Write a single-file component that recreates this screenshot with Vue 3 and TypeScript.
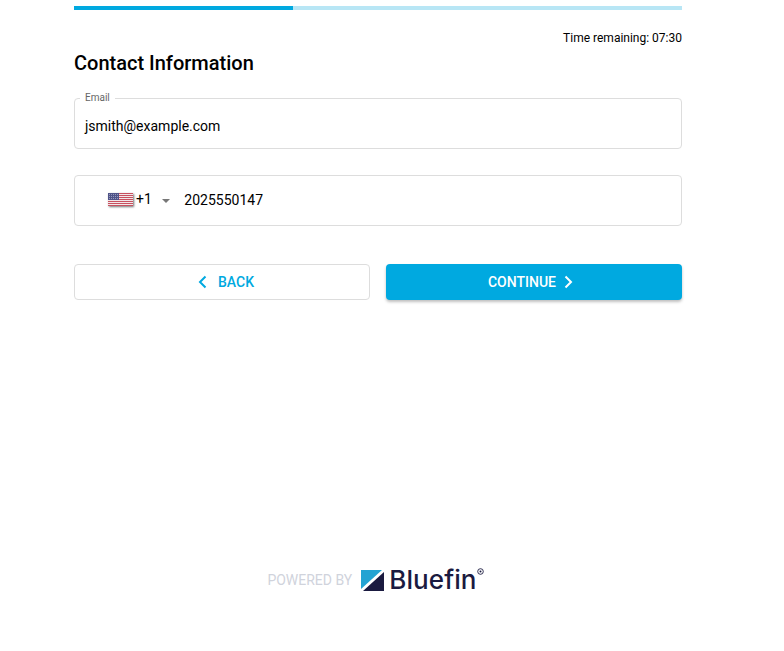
<script setup lang="ts">
const progress = 36
const stripes = [0, 2, 4, 6, 8, 10, 12]
</script>

<template>
  <main class="page">
    <div class="track"><div class="fill" :style="{ width: progress + '%' }"></div></div>
    <p class="timer">Time remaining: 07:30</p>
    <h1 class="title">Contact Information</h1>
    <fieldset class="field email">
      <legend class="legend">Email</legend>
      <span class="value">jsmith@example.com</span>
    </fieldset>
    <div class="field phone">
      <svg class="flag" width="25" height="13" viewBox="0 0 25 13">
        <rect width="25" height="13" fill="#f1e6e8" />
        <rect v-for="y in stripes" :key="y" x="0" :y="y" width="25" height="1" fill="#c8505f" />
        <rect width="11" height="7" fill="#4f5388" />
        <path d="M1 1.500h9M1 3.500h9M1 5.500h9" stroke="#a9abc8" stroke-width="0.8" stroke-dasharray="1 1" />
      </svg>
      <span class="code">+1</span>
      <span class="caret"></span>
      <span class="value">2025550147</span>
    </div>
    <div class="actions">
      <button class="btn back" type="button">
        <svg width="24" height="24" viewBox="0 0 24 24"><path d="M15.500 6.500 10 12l5.500 5.500" fill="none" stroke="currentColor" stroke-width="2" /></svg>
        <span class="back-label">BACK</span>
      </button>
      <button class="btn next" type="button">
        <span>CONTINUE</span>
        <svg width="24" height="24" viewBox="0 0 24 24"><path d="M9.500 6.500 15 12l-5.500 5.500" fill="none" stroke="currentColor" stroke-width="2" /></svg>
      </button>
    </div>
    <footer class="footer">
      <span class="powered">POWERED BY</span>
      <span class="logo">
        <svg width="23" height="21" viewBox="0 0 23 21">
          <path d="M0 0h21L0 19z" fill="#22a3d3" />
          <path d="M23 2v19H2z" fill="#1a1a40" />
        </svg>
        <span class="brand">Bluefin</span>
        <svg class="reg" width="7" height="7" viewBox="0 0 7 7"><circle cx="3.500" cy="3.500" r="2.800" fill="none" stroke="#1a1a40" stroke-width="0.9" /><circle cx="3.500" cy="3.500" r="1" fill="#1a1a40" /></svg>
      </span>
    </footer>
  </main>
</template>

<style scoped>
.page {
  box-sizing: border-box;
  width: 784px;
  height: 651px;
  padding: 6px 102px 0 74px;
  font-family: Roboto, "Liberation Sans", sans-serif;
  color: #000;
  background: #fff;
  display: flex;
  flex-direction: column;
}
.track { height: 4px; background: #b8e6f5; }
.fill { height: 100%; background: #00a9e0; }
.timer {
  margin: 21px 0 0;
  font-size: 12px;
  line-height: 14px;
  text-align: right;
}
.title {
  margin: 6px 0 0;
  font-size: 20px;
  line-height: 24px;
  font-weight: 500;
}
.field {
  box-sizing: border-box;
  margin: 0;
  border: 1px solid #dddddd;
  border-radius: 4px;
  min-width: 0;
}
.email {
  height: 57px;
  margin-top: 17px;
  padding: 0 10px;
}
.legend {
  margin-left: -5px;
  padding: 0 5px;
  font-size: 10px;
  line-height: 12px;
  color: #666;
}
.email .value { display: block; margin-top: 12px; }
.value { font-size: 14px; line-height: 20px; }
.phone {
  height: 51px;
  margin-top: 26px;
  padding: 0 0 0 33px;
  display: flex;
  align-items: center;
  font-size: 14px;
}
.flag { box-shadow: 1px 1px 2px rgba(0, 0, 0, 0.55); margin-bottom: 2px; }
.code { margin-left: 3px; line-height: 16px; margin-bottom: 3px; }
.caret {
  margin-left: 10px;
  width: 0;
  height: 0;
  border-left: 4.500px solid transparent;
  border-right: 4.500px solid transparent;
  border-top: 4.500px solid #777;
  margin-top: 1px;
}
.phone .value { margin-left: 14.500px; margin-bottom: 2px; }
.actions {
  display: grid;
  grid-template-columns: 1fr 1fr;
  gap: 16px;
  margin-top: 38px;
}
.btn {
  box-sizing: border-box;
  height: 36px;
  border-radius: 4px;
  font-family: inherit;
  font-size: 14px;
  font-weight: 500;
  display: flex;
  align-items: center;
  justify-content: center;
  padding: 0;
}
.back {
  background: #fff;
  border: 1px solid #dddddd;
  color: #00a9e0;
}
.back-label { margin-left: 4px; }
.next {
  background: #00a9e0;
  border: 0;
  color: #fff;
  box-shadow: 0 2px 3px rgba(0, 0, 0, 0.25);
}
.footer {
  margin-top: 265px;
  display: flex;
  align-items: center;
  justify-content: center;
  gap: 9px;
  padding-right: 5px;
}
.powered {
  font-size: 14px;
  color: #d0d3dc;
}
.logo { display: flex; align-items: center; gap: 5px; }
.brand {
  font-family: Inter, "Noto Sans", sans-serif;
  font-size: 26px;
  line-height: 30px;
  font-weight: 500;
  letter-spacing: 0.1px;
  color: #1a1a40;
}
.reg { margin-left: -5px; margin-bottom: 17px; }
</style>
